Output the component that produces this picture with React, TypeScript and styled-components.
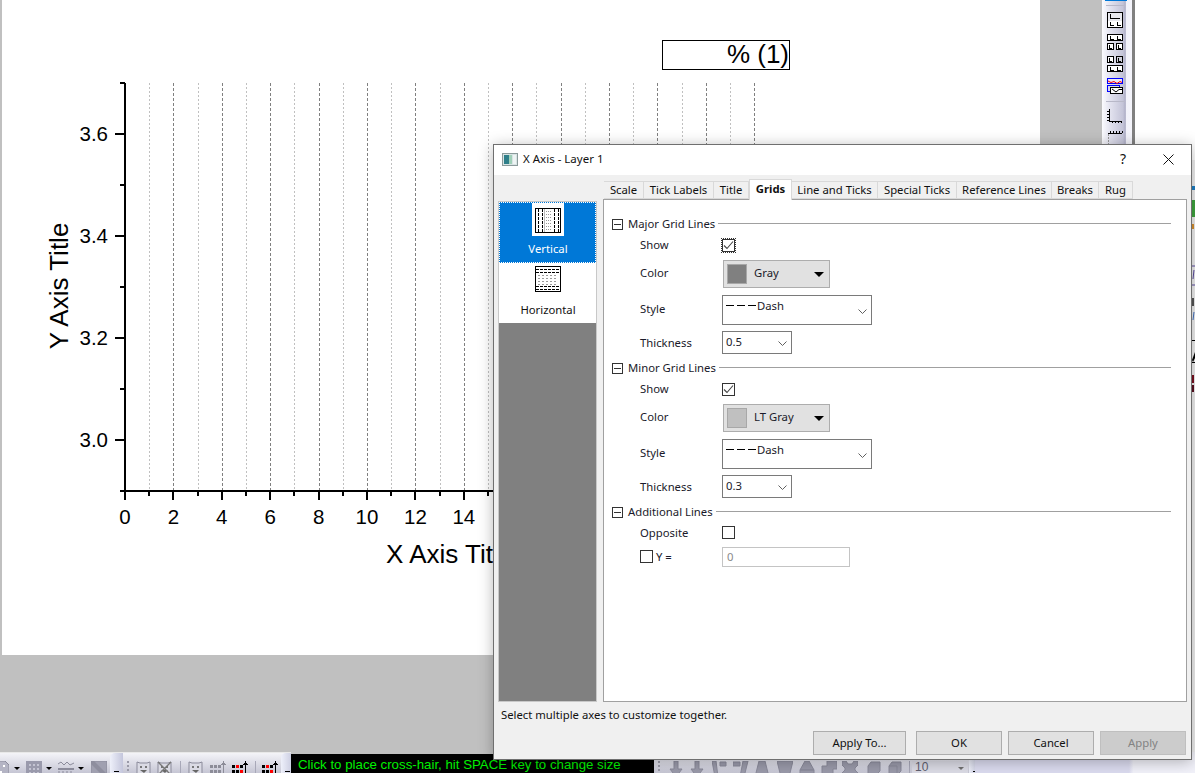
import React from "react";
import styled, { createGlobalStyle } from "styled-components";

const Global = createGlobalStyle`
  html, body { margin: 0; padding: 0; background: #fff; overflow: hidden; }
  * { box-sizing: border-box; }
`;

const Screen = styled.div`
  position: relative;
  width: 1195px;
  height: 773px;
  overflow: hidden;
  display: flex;
  flex-direction: column;
  font-family: "Noto Sans", "Liberation Sans", sans-serif;
`;
const Upper = styled.div`
  flex: 0 0 752px;
  display: flex;
  overflow: hidden;
`;
const Workspace = styled.div`
  flex: 0 0 1102px;
  background: #c0c0c0;
  padding-left: 2px;
`;
const Page = styled.div`
  position: relative;
  width: 1038px;
  height: 655px;
  background: #fff;
`;
const ChartSvg = styled.svg`
  display: block;
  width: 1038px;
  height: 655px;
`;
const Legend = styled.div`
  position: absolute;
  left: 660px;
  top: 40px;
  width: 128px;
  height: 30px;
  border: 1px solid #000;
  font: 26px/26px "Liberation Sans", sans-serif;
  color: #000;
  text-align: right;
  white-space: nowrap;
`;
const VBar = styled.div`
  flex: 0 0 33px;
  display: flex;
  flex-direction: column;
  align-items: flex-start;
  padding-left: 5px;
  background: linear-gradient(90deg, #fbfbfe 0, #e4e4f0 25%, #c4c4d8 70%, #aeaec6 78%, #f2f2fa 80%, #f4f4fb 100%);
  border-right: 3px solid #808080;
`;
const VBlue = styled.div`
  width: 22px;
  height: 1px;
  margin-left: -2px;
  background: #0078d7;
`;
const VSep = styled.div<{ $t: number; $b: number }>`
  width: 19px;
  height: 1px;
  background: #b8b8c8;
  margin: ${(p) => p.$t}px 0 ${(p) => p.$b}px -1px;
`;
const VIcon = styled.svg<{ $mb?: number; $mt?: number; $h?: number }>`
  display: block;
  width: 16px;
  height: ${(p) => p.$h ?? 16}px;
  margin-top: ${(p) => p.$mt ?? 0}px;
  margin-bottom: ${(p) => p.$mb ?? 6}px;
  flex: none;
`;
const RightPane = styled.div`
  flex: 1;
  background: #fff;
  position: relative;
`;
const EdgeMarks = styled.svg`
  position: absolute;
  right: 0;
  top: 0;
  width: 3px;
  height: 752px;
`;

/* ---------- bottom bars ---------- */
const BottomBar = styled.div`
  flex: 0 0 21px;
  display: flex;
  background: #c0c0c0;
`;
const ToolBar = styled.div<{ $w: number }>`
  flex: 0 0 ${(p) => p.$w}px;
  height: 21px;
  display: flex;
  align-items: flex-start;
  padding-top: 8px;
  overflow: hidden;
  position: relative;
  background: linear-gradient(180deg, #f4f4f8 0, #e6e6ee 30%, #c6c6d4 100%);
  border-top: 1px solid #e8e8e8;
`;
const Slot = styled.div<{ $ml: number }>`
  flex: none;
  margin-left: ${(p) => p.$ml}px;
  display: flex;
`;
const Sep = styled.div<{ $ml: number }>`
  flex: none;
  width: 1px;
  height: 14px;
  margin-left: ${(p) => p.$ml}px;
  background: #a8a8b8;
`;
const Grip = styled.div<{ $ml: number }>`
  flex: none;
  width: 2px;
  height: 13px;
  margin-left: ${(p) => p.$ml}px;
  background: repeating-linear-gradient(180deg, #9a9aa8 0 2px, transparent 2px 4px);
`;
const Caret = styled.div<{ $ml: number }>`
  flex: none;
  margin: 6px 0 0 ${(p) => p.$ml}px;
  border-left: 3px solid transparent;
  border-right: 3px solid transparent;
  border-top: 3px solid #000;
`;
const EndCap = styled.div<{ $ml: number; $w: number }>`
  flex: none;
  align-self: stretch;
  width: ${(p) => p.$w}px;
  margin: -8px 0 0 ${(p) => p.$ml}px;
  border-top-left-radius: 5px;
  background: linear-gradient(90deg, #eef0fa 0, #c4c6dc 100%);
  position: relative;
`;
const CapMark = styled.div`
  position: absolute;
  left: 4px;
  bottom: 1px;
  width: 5px;
  height: 1px;
  background: #000;
`;
const Status = styled.div`
  flex: 0 0 363px;
  height: 19px;
  margin-top: 2px;
  background: #000;
  color: #00f000;
  font: 13.27px/22px "Liberation Sans", sans-serif;
  padding-left: 7px;
  white-space: nowrap;
  overflow: hidden;
`;
const SizeBox = styled.div`
  flex: none;
  width: 56px;
  height: 13px;
  margin-left: 2px;
  background: #dcdce6;
  color: #606070;
  font: 12px/13px "Liberation Sans", sans-serif;
  padding-left: 3px;
  position: relative;
`;
const SizeCaret = styled.div`
  position: absolute;
  right: 4px;
  top: 6px;
  border-left: 3px solid transparent;
  border-right: 3px solid transparent;
  border-top: 3px solid #707070;
`;
const LightTail = styled.div`
  flex: 1;
  height: 21px;
  background: linear-gradient(90deg, #dcdcf0 0, #dcdcf0 70%, #f2f2fa 72%, #f2f2fa 100%);
`;

/* ---------- dialog ---------- */
const Dialog = styled.div`
  position: absolute;
  left: 493px;
  top: 144px;
  width: 699px;
  height: 616px;
  background: #f0f0f0;
  border: 1px solid #6f6f6f;
  box-shadow: 0 2px 14px rgba(0, 0, 0, 0.28);
  display: flex;
  flex-direction: column;
  font-size: 11.3px;
  color: #000;
`;
const TitleBar = styled.div`
  flex: 0 0 30px;
  background: #fff;
  display: flex;
  align-items: center;
  padding: 0 0 2px 8px;
`;
const TitleText = styled.div`
  margin: 0 0 2px 5px;
  font-size: 11.5px;
  color: #111;
`;
const Help = styled.div`
  margin: 0 0 2px auto;
  width: 46px;
  padding-left: 2px;
  text-align: center;
  font-size: 14px;
  color: #111;
`;
const Close = styled.div`
  width: 46px;
  display: flex;
  justify-content: center;
`;
const Body = styled.div`
  flex: 0 0 527px;
  display: flex;
  padding-left: 4px;
`;
const SideList = styled.div`
  flex: 0 0 99px;
  margin-top: 26px;
  background: #808080;
  border: 1px solid #c8c8c8;
  display: flex;
  flex-direction: column;
`;
const SideItem = styled.div<{ $active?: boolean }>`
  flex: 0 0 ${(p) => (p.$active ? 61 : 60)}px;
  background: ${(p) => (p.$active ? "#0078d7" : "#fff")};
  color: ${(p) => (p.$active ? "#fff" : "#111")};
  outline: ${(p) => (p.$active ? "1px dotted #fff" : "none")};
  outline-offset: -1px;
  display: flex;
  flex-direction: column;
  align-items: center;
  position: relative;
`;
const SideThumb = styled.div<{ $active?: boolean }>`
  width: 32px;
  height: ${(p) => (p.$active ? 33 : 32)}px;
  margin-top: ${(p) => (p.$active ? 1 : 0)}px;
  background: #fff;
  display: flex;
  align-items: ${(p) => (p.$active ? "flex-end" : "center")};
  justify-content: center;
  padding-bottom: ${(p) => (p.$active ? 3 : 0)}px;
`;
const SideLabel = styled.div<{ $active?: boolean }>`
  margin-top: ${(p) => (p.$active ? 5 : 7)}px;
  padding-left: 1px;
  line-height: 16px;
`;
const Right = styled.div`
  flex: 0 0 584px;
  margin-left: 6px;
  display: flex;
  flex-direction: column;
`;
const TabRow = styled.div`
  flex: 0 0 24px;
  display: flex;
  align-items: flex-end;
  padding-left: 1px;
  position: relative;
  z-index: 1;
`;
const Tab = styled.div<{ $w: number; $on?: boolean }>`
  flex: 0 0 ${(p) => p.$w}px;
  height: ${(p) => (p.$on ? 21 : 18)}px;
  margin-bottom: ${(p) => (p.$on ? -1 : 0)}px;
  background: ${(p) => (p.$on ? "#fff" : "#f0f0f0")};
  border: 1px solid #d9d9d9;
  border-left-width: ${(p) => (p.$on ? 1 : 0)}px;
  border-bottom: ${(p) => (p.$on ? "none" : "1px solid #d9d9d9")};
  font-weight: ${(p) => (p.$on ? 700 : 400)};
  text-align: center;
  line-height: ${(p) => (p.$on ? 18 : 15)}px;
  white-space: nowrap;
  color: #111;
`;
const Panel = styled.div`
  flex: 1;
  background: #fff;
  border: 1px solid #a0a0a0;
  padding: 17px 15px 0 8px;
`;
const Group = styled.div`
  margin-bottom: 5px;
`;
const GroupHead = styled.div`
  height: 14px;
  display: flex;
  align-items: center;
`;
const Toggle = styled.div`
  flex: none;
  width: 11px;
  height: 11px;
  border: 1px solid #333;
  display: flex;
  align-items: center;
  justify-content: center;
`;
const ToggleBar = styled.div`
  width: 7px;
  height: 1px;
  background: #333;
`;
const GroupTitle = styled.div`
  margin: 0 0 2px 5px;
  white-space: nowrap;
  color: #1a1a2a;
`;
const Rule = styled.div`
  flex: 1;
  height: 1px;
  margin: -2px 0 0 3px;
  background: #a0a0a0;
`;
const Row = styled.div<{ $h: number }>`
  height: ${(p) => p.$h}px;
  display: grid;
  grid-template-columns: 82px 1fr;
  align-items: center;
  padding-left: 28px;
`;
/* $dy moves the label off the row's centre by half its value (positive = up) */
const RowLabel = styled.div<{ $dy?: number }>`
  display: flex;
  align-items: center;
  gap: 3px;
  white-space: nowrap;
  color: #1a1a2a;
  margin: ${(p) => Math.max(0, -(p.$dy ?? 0))}px 0 ${(p) => Math.max(0, p.$dy ?? 0)}px;
`;
const Check = styled.div<{ $focus?: boolean; $low?: boolean }>`
  width: 13px;
  height: 13px;
  margin-top: ${(p) => (p.$low ? 3 : 0)}px;
  border: 1px solid #333;
  background: #fff;
  outline: ${(p) => (p.$focus ? "1px dotted #333" : "none")};
  outline-offset: 0;
  display: flex;
  align-items: center;
  justify-content: center;
`;
const ColorBtn = styled.div`
  width: 107px;
  height: 28px;
  margin-left: 1px;
  background: #e1e1e1;
  border: 1px solid #adadad;
  display: flex;
  align-items: center;
  padding-left: 3px;
`;
const Swatch = styled.div<{ $c: string }>`
  width: 20px;
  height: 20px;
  background: ${(p) => p.$c};
  border: 1px solid #a8a8a8;
`;
const ColorName = styled.div`
  margin: 0 0 3px 7px;
  color: #1a1a2a;
`;
const BtnArrow = styled.div`
  margin-left: auto;
  margin-right: 5px;
  border-left: 5px solid transparent;
  border-right: 5px solid transparent;
  border-top: 5px solid #000;
`;
const Combo = styled.div<{ $w: number; $h: number }>`
  width: ${(p) => p.$w}px;
  height: ${(p) => p.$h}px;
  background: #fff;
  border: 1px solid #7a7a7a;
  position: relative;
  padding-left: 3px;
  display: flex;
  align-items: ${(p) => (p.$h > 25 ? "flex-start" : "center")};
`;
const DashText = styled.div<{ $pad?: number }>`
  line-height: 18px;
  padding-top: ${(p) => p.$pad ?? 0}px;
  color: #1a1a2a;
`;
const DashGlyph = styled.div`
  width: 30px;
  height: 1px;
  margin: 9px 1px 0 0;
  background: repeating-linear-gradient(90deg, #000 0 8px, transparent 8px 11px);
`;
const Chevron = styled.svg<{ $top: number }>`
  position: absolute;
  right: 4px;
  top: ${(p) => p.$top}px;
  width: 9px;
  height: 5px;
`;
const TextBox = styled.div`
  width: 128px;
  height: 20px;
  background: #fff;
  border: 1px solid #c4c4c4;
  color: #8a8a8a;
  padding-left: 4px;
  line-height: 18px;
`;
const Footer = styled.div`
  flex: 1;
  display: flex;
  flex-direction: column;
`;
const Hint = styled.div`
  height: 28px;
  line-height: 25px;
  padding-left: 7px;
  color: #111;
`;
const Buttons = styled.div`
  display: flex;
  justify-content: flex-end;
  gap: 6px;
  padding: 1px 5px 0 0;
`;
const Btn = styled.div<{ $w: number; $gapRight?: number; $off?: boolean }>`
  width: ${(p) => p.$w}px;
  height: 24px;
  margin-right: ${(p) => p.$gapRight ?? 0}px;
  background: ${(p) => (p.$off ? "#cccccc" : "#e1e1e1")};
  border: 1px solid ${(p) => (p.$off ? "#bfbfbf" : "#adadad")};
  color: ${(p) => (p.$off ? "#838383" : "#111")};
  text-align: center;
  line-height: 22px;
`;

/* ---------- chart data ---------- */
const X0 = 123; // page-space x of value 0 (screen 125)
const UNIT = 24.2;
const gridLines = Array.from({ length: 26 }, (_, i) => i + 1);
const yTicks = [
  { y: 83, major: false },
  { y: 134, major: true, label: "3.6" },
  { y: 185, major: false },
  { y: 236, major: true, label: "3.4" },
  { y: 287, major: false },
  { y: 338, major: true, label: "3.2" },
  { y: 389, major: false },
  { y: 440, major: true, label: "3.0" },
  { y: 491, major: false },
];

const Chart = () => (
  <ChartSvg viewBox="0 0 1038 655">
    <g shapeRendering="crispEdges">
      {gridLines.map((i) => {
        const x = Math.round(X0 + i * UNIT) + 0.5;
        return (
          <line
            key={i}
            x1={x}
            x2={x}
            y1={83}
            y2={490}
            stroke={i % 2 ? "#c0c0c0" : "#808080"}
            strokeDasharray={i % 2 ? "2 2" : "3 2"}
          />
        );
      })}
      <rect x={X0 - 1} y={83} width={2} height={417} fill="#000" />
      <rect x={X0 - 5} y={490} width={640} height={2} fill="#000" />
      {yTicks.map((t) => (
        <rect key={t.y} x={t.major ? X0 - 10 : X0 - 5} y={t.y - 1} width={t.major ? 10 : 5} height={2} fill="#000" />
      ))}
      {gridLines.map((i) => {
        const x = Math.round(X0 + i * UNIT) - 1;
        return <rect key={i} x={x} y={491} width={2} height={i % 2 ? 5 : 9} fill="#000" />;
      })}
    </g>
    <g fontFamily="'Liberation Sans', sans-serif" fontSize="20.5" fill="#000">
      {yTicks.filter((t) => t.label).map((t) => (
        <text key={t.y} x={106} y={t.y + 6.5} textAnchor="end">{t.label}</text>
      ))}
      {[0, 2, 4, 6, 8, 10, 12, 14].map((v) => (
        <text key={v} x={X0 + v * UNIT} y={524} textAnchor="middle">{v}</text>
      ))}
    </g>
    <g fontFamily="'Liberation Sans', sans-serif" fontSize="26" fill="#000">
      <text x={384} y={563}>X Axis Title</text>
      <text transform="translate(66 286) rotate(-90)" textAnchor="middle">Y Axis Title</text>
    </g>
  </ChartSvg>
);

/* ---------- icons ---------- */
const S = { fill: "none", stroke: "#000", strokeWidth: 1, shapeRendering: "crispEdges" as const };

const ToolIcons = () => (
  <>
    <VIcon viewBox="0 0 16 16" $mt={6}>
      <rect x="0.5" y="0.5" width="15" height="15" fill="#e8e8ee" stroke="#000" shapeRendering="crispEdges" />
      <rect x="1" y="9" width="14" height="6" fill="#fff" />
      <path d="M3.5 2v4.5H13M3.5 9.5v3.5H7M10.5 9.5v3.5H14" {...S} />
    </VIcon>
    <VIcon viewBox="0 0 16 16">
      <rect x="0.5" y="0.5" width="15" height="6" fill="#fff" stroke="#000" shapeRendering="crispEdges" />
      <path d="M3.5 2v3H7M10.5 2v3H14" {...S} />
      <rect x="0.5" y="9.5" width="6" height="6" fill="#fff" stroke="#000" shapeRendering="crispEdges" />
      <rect x="9.5" y="9.5" width="6" height="6" fill="#fff" stroke="#000" shapeRendering="crispEdges" />
      <path d="M2.5 11v3H5M11.5 11v3H14" {...S} />
    </VIcon>
    <VIcon viewBox="0 0 16 16">
      <rect x="0.5" y="0.5" width="6" height="6" fill="#fff" stroke="#000" shapeRendering="crispEdges" />
      <rect x="9.5" y="0.5" width="6" height="6" fill="#cfd0dc" stroke="#000" shapeRendering="crispEdges" />
      <path d="M2.5 2v3H5M11.5 2v3H14" {...S} />
      <rect x="0.5" y="9.5" width="15" height="6" fill="#fff" stroke="#000" shapeRendering="crispEdges" />
      <path d="M3.5 11v3H7M10.5 11v3H14" {...S} />
    </VIcon>
    <VIcon viewBox="0 0 16 16">
      <rect x="0.5" y="0.5" width="15" height="5" fill="#e8e8f4" stroke="#0000ff" shapeRendering="crispEdges" />
      <path d="M1 3l3 1.5 3-1 3 2 3-2 2 1" fill="none" stroke="#f00" />
      <rect x="0.5" y="7.5" width="12" height="6" fill="#d8d8e6" stroke="#0000ff" shapeRendering="crispEdges" />
      <rect x="3.5" y="9.5" width="12" height="6" fill="#fff" stroke="#000" shapeRendering="crispEdges" />
      <path d="M5 11l4 3 3-2.5h3" fill="none" stroke="#000" />
    </VIcon>
    <VSep $t={1} $b={7} />
    <VIcon viewBox="0 0 16 14" $mb={8} $h={14}>
      <path d="M2.5 0v12.5H15" {...S} />
      <path d="M0 2h2M0 5h2M0 8h2M0 11h2M5 13v1M8 13v1M11 13v1M14 13v1" {...S} />
    </VIcon>
    <VIcon viewBox="0 0 16 14" $h={14}>
      <path d="M1 2.5h14" {...S} />
      <path d="M3 0v2M6 0v2M9 0v2M12 0v2M15 0v2" {...S} />
      <path d="M1.5 3v10h13" fill="none" stroke="#999" strokeDasharray="2 1" shapeRendering="crispEdges" />
    </VIcon>
  </>
);

const G = "#8b8b9b";
const Doc = () => (
  <svg width="16" height="16" viewBox="0 0 16 16">
    <path d="M0 0h12l4 4v12H0z" fill="#b4b4c4" stroke={G} />
    <path d="M5 6h2v2H5zM10 4h2v2h-2zM7 10h2v2H7z" fill="#fff" />
  </svg>
);
const GridBlock = () => (
  <svg width="16" height="16" viewBox="0 0 16 16">
    <rect width="16" height="16" fill="#9a9aac" />
    {[4, 8, 12].map((a) => [4, 8, 12].map((b) => <rect key={`${a}${b}`} x={a - 1} y={b - 1} width="2" height="2" fill="#c4c4d2" />))}
  </svg>
);
const Wave = () => (
  <svg width="16" height="16" viewBox="0 0 16 16">
    <path d="M0 3l3-2 3 3 3-3 3 3 4-2" fill="none" stroke={G} />
    <rect y="7" width="16" height="2" fill={G} />
    <path d="M1 10v6M5 10v6M9 10v6M13 10v6" stroke={G} />
  </svg>
);
const Plain = () => (
  <svg width="16" height="16" viewBox="0 0 16 16">
    <rect width="16" height="16" fill="#a0a0b0" stroke={G} />
    <path d="M3 0l13 13v3h-3L0 3V0z" fill="#8e8e9e" />
  </svg>
);
const Face = ({ crossed }: { crossed?: boolean }) => (
  <svg width="15" height="16" viewBox="0 0 15 16">
    <path d="M1 1l3 1h7l3-1v11l-3 3H4l-3-3z" fill="#dadae4" stroke={G} />
    <circle cx="5" cy="6" r="1" fill="#555" />
    <circle cx="10" cy="6" r="1" fill="#555" />
    <path d="M4 9h7l-3 3z" fill="#666" />
    {crossed && <path d="M1 1l13 13M14 1L1 14" stroke="#777" strokeWidth="1.4" />}
  </svg>
);
const DotsUp = ({ c, r }: { c: string; r: string }) => (
  <svg width="16" height="16" viewBox="0 0 16 16" shapeRendering="crispEdges">
    <rect x="0" y="4" width="3" height="3" fill={c} />
    <rect x="4" y="4" width="3" height="3" fill={r} />
    <rect x="8" y="4" width="3" height="3" fill={c} />
    <rect x="0" y="9" width="3" height="3" fill={c} />
    <rect x="4" y="9" width="3" height="3" fill={c} />
    <rect x="8" y="9" width="3" height="3" fill={r} />
    <rect x="13" y="2" width="1" height="12" fill={c} />
    <path d="M11 4h5L13.5 0z" fill={c} />
    <rect x="11" y="14" width="5" height="1" fill={c} />
  </svg>
);
const Gray = ({ d }: { d: string }) => (
  <svg width="16" height="16" viewBox="0 0 16 16">
    <path d={d} fill="#9a9aaa" stroke="#8a8a9a" />
  </svg>
);

const lowerShapes: { ml: number; d: string }[] = [
  { ml: 8, d: "M6 0v8H2l6 8 6-8h-4V0z" },
  { ml: 5, d: "M6 0v8H2l6 8 6-8h-4V0z" },
  { ml: 7, d: "M0 0h4l2 16H3zM8 1h6v4H8z" },
  { ml: 5, d: "M10 0h5l-4 16H7zM0 1h7v4H0z" },
  { ml: 5, d: "M5 0h6l4 16H1z" },
  { ml: 7, d: "M0 0h16l-4 16H4z" },
  { ml: 6, d: "M6 0h4l5 9H1zM1 9h14v7H1z" },
  { ml: 6, d: "M6 0h10v8h-4v8H1V5h5z" },
  { ml: 5, d: "M0 0h4l2 3h4l2-3h4v4l-3 3v2l3 3v4h-4l-2-3H6l-2 3H0v-4l3-3V7L0 4z" },
  { ml: 8, d: "M5 1h9v9l-4 4H2V5z" },
  { ml: 5, d: "M5 1h9v9l-4 4H2V5zM2 5h8v9" },
];

const ChevronDown = ({ top }: { top: number }) => (
  <Chevron $top={top} viewBox="0 0 9 5">
    <path d="M0.5 0.5l4 4 4-4" fill="none" stroke="#606060" />
  </Chevron>
);

const Tick = () => (
  <svg width="11" height="11" viewBox="0 0 11 11">
    <path d="M1 5.5l3 3 6-7" fill="none" stroke="#444" strokeWidth="1.1" />
  </svg>
);

function GridGroup(props: { title: string; color: string; swatch: string; thick: string; focus?: boolean }) {
  return (
    <Group>
      <GroupHead>
        <Toggle><ToggleBar /></Toggle>
        <GroupTitle>{props.title}</GroupTitle>
        <Rule />
      </GroupHead>
      <Row $h={25}>
        <RowLabel $dy={-1}>Show</RowLabel>
        <Check $focus={props.focus} $low><Tick /></Check>
      </Row>
      <Row $h={36}>
        <RowLabel $dy={3}>Color</RowLabel>
        <ColorBtn>
          <Swatch $c={props.swatch} />
          <ColorName>{props.color}</ColorName>
          <BtnArrow />
        </ColorBtn>
      </Row>
      <Row $h={36}>
        <RowLabel $dy={3}>Style</RowLabel>
        <Combo $w={150} $h={30}>
          <DashGlyph />
          <DashText $pad={1}>Dash</DashText>
          <ChevronDown top={13} />
        </Combo>
      </Row>
      <Row $h={28}>
        <RowLabel>Thickness</RowLabel>
        <Combo $w={70} $h={23}>
          <DashText>{props.thick}</DashText>
          <ChevronDown top={9} />
        </Combo>
      </Row>
    </Group>
  );
}

const App = () => (
  <Screen>
    <Global />
    <Upper>
      <Workspace>
        <Page>
          <Chart />
          <Legend>% (1)</Legend>
        </Page>
      </Workspace>
      <VBar>
        <VBlue />
        <VSep $t={4} $b={0} />
        <ToolIcons />
      </VBar>
      <RightPane>
        <EdgeMarks viewBox="0 0 3 752">
          <rect y="160" width="3" height="592" fill="#f1f1f1" />
          <rect y="186" width="3" height="4" fill="#1f7fc4" />
          <rect y="200" width="3" height="17" fill="#3fa53f" />
          <rect y="224" width="2" height="5" fill="#d89030" />
          <path d="M0 266h3M2 270l-1 9M0 285h3" stroke="#5a4aa0" fill="none" />
          <rect y="298" width="2" height="8" fill="#555" />
          <path d="M2 312l-1 8" stroke="#4070c0" />
          <rect y="340" width="3" height="1" fill="#000" />
          <path d="M0 360l3-8v6l-2 4z" fill="#000" />
          <rect y="362" width="3" height="1" fill="#000" />
          <rect y="375" width="2" height="8" fill="#7a1020" />
          <rect y="385" width="2" height="7" fill="#5a1020" />
        </EdgeMarks>
      </RightPane>
    </Upper>

    <BottomBar>
      <ToolBar $w={291}>
        <Slot $ml={-7}><Doc /></Slot>
        <Caret $ml={5} />
        <Slot $ml={6}><GridBlock /></Slot>
        <Caret $ml={4} />
        <Slot $ml={6}><Wave /></Slot>
        <Caret $ml={4} />
        <Slot $ml={7}><Plain /></Slot>
        <EndCap $ml={3} $w={13}><CapMark /></EndCap>
        <Grip $ml={4} />
        <Slot $ml={7}><Face /></Slot>
        <Slot $ml={6}><Face crossed /></Slot>
        <Sep $ml={8} />
        <Slot $ml={7}><Face /></Slot>
        <Slot $ml={7}><DotsUp c="#8c8c98" r="#8c8c98" /></Slot>
        <Slot $ml={6}><DotsUp c="#000" r="#f00" /></Slot>
        <Sep $ml={7} />
        <Slot $ml={6}><DotsUp c="#000" r="#f00" /></Slot>
        <EndCap $ml={3} $w={13}><CapMark /></EndCap>
      </ToolBar>
      <Status>Click to place cross-hair, hit SPACE key to change size</Status>
      <ToolBar $w={321}>
        <Grip $ml={4} />
        {lowerShapes.map((s, i) => (
          <Slot key={i} $ml={s.ml}><Gray d={s.d} /></Slot>
        ))}
        <Sep $ml={6} />
        <SizeBox>10<SizeCaret /></SizeBox>
        <EndCap $ml={1} $w={10}><CapMark /></EndCap>
      </ToolBar>
      <LightTail />
    </BottomBar>

    <Dialog>
      <TitleBar>
        <svg width="16" height="13" viewBox="0 0 16 13" shapeRendering="crispEdges">
          <rect x="0.5" y="0.5" width="15" height="12" fill="#d8e4e4" stroke="#8a9a9a" />
          <rect x="2" y="2" width="5" height="9" fill="#2f7f8a" />
          <rect x="7" y="2" width="3" height="9" fill="#9fd0b8" />
          <rect x="11" y="2" width="3" height="9" fill="#eef4f4" />
        </svg>
        <TitleText>X Axis - Layer 1</TitleText>
        <Help>?</Help>
        <Close>
          <svg width="11" height="11" viewBox="0 0 11 11">
            <path d="M0.5 0.5l10 10M10.5 0.5l-10 10" stroke="#111" fill="none" />
          </svg>
        </Close>
      </TitleBar>
      <Body>
        <SideList>
          <SideItem $active>
            <SideThumb $active>
              <svg width="26" height="25" viewBox="0 0 26 25" shapeRendering="crispEdges">
                <rect x="0.5" y="0.5" width="25" height="24" fill="#fff" stroke="#000" />
                {[3, 7, 19, 23].map((x) => (
                  <path key={x} d={`M${x}.5 1v23`} stroke="#000" strokeDasharray="3 1" />
                ))}
                {[11, 13, 15].map((x) => (
                  <path key={x} d={`M${x}.5 3v20`} stroke="#999" strokeDasharray="1 2" />
                ))}
                <rect x="9" y="1" width="1" height="23" fill="#bbb" />
              </svg>
            </SideThumb>
            <SideLabel $active>Vertical</SideLabel>
          </SideItem>
          <SideItem>
            <SideThumb>
              <svg width="26" height="26" viewBox="0 0 26 26" shapeRendering="crispEdges">
                <rect x="0.5" y="0.5" width="25" height="25" fill="#fff" stroke="#000" />
                {[3, 6, 20, 23].map((y) => (
                  <path key={y} d={`M1 ${y}.5h24`} stroke="#000" strokeDasharray="3 1" />
                ))}
                {[9, 12, 15, 18].map((y) => (
                  <path key={y} d={`M3 ${y}.5h20`} stroke="#999" strokeDasharray="2 2" />
                ))}
              </svg>
            </SideThumb>
            <SideLabel>Horizontal</SideLabel>
          </SideItem>
        </SideList>
        <Right>
          <TabRow>
            <Tab $w={40}>Scale</Tab>
            <Tab $w={70}>Tick Labels</Tab>
            <Tab $w={35}>Title</Tab>
            <Tab $w={43} $on>Grids</Tab>
            <Tab $w={86}>Line and Ticks</Tab>
            <Tab $w={79}>Special Ticks</Tab>
            <Tab $w={95}>Reference Lines</Tab>
            <Tab $w={47}>Breaks</Tab>
            <Tab $w={34}>Rug</Tab>
          </TabRow>
          <Panel>
            <GridGroup title="Major Grid Lines" color="Gray" swatch="#808080" thick="0.5" focus />
            <GridGroup title="Minor Grid Lines" color="LT Gray" swatch="#c0c0c0" thick="0.3" />
            <Group>
              <GroupHead>
                <Toggle><ToggleBar /></Toggle>
                <GroupTitle>Additional Lines</GroupTitle>
                <Rule />
              </GroupHead>
              <Row $h={26}>
                <RowLabel>Opposite</RowLabel>
                <Check />
              </Row>
              <Row $h={24}>
                <RowLabel $dy={2}><Check />Y =</RowLabel>
                <TextBox>0</TextBox>
              </Row>
            </Group>
          </Panel>
        </Right>
      </Body>
      <Footer>
        <Hint>Select multiple axes to customize together.</Hint>
        <Buttons>
          <Btn $w={93} $gapRight={4}>Apply To...</Btn>
          <Btn $w={86}>OK</Btn>
          <Btn $w={86}>Cancel</Btn>
          <Btn $w={86} $off>Apply</Btn>
        </Buttons>
      </Footer>
    </Dialog>
  </Screen>
);

export default App;
